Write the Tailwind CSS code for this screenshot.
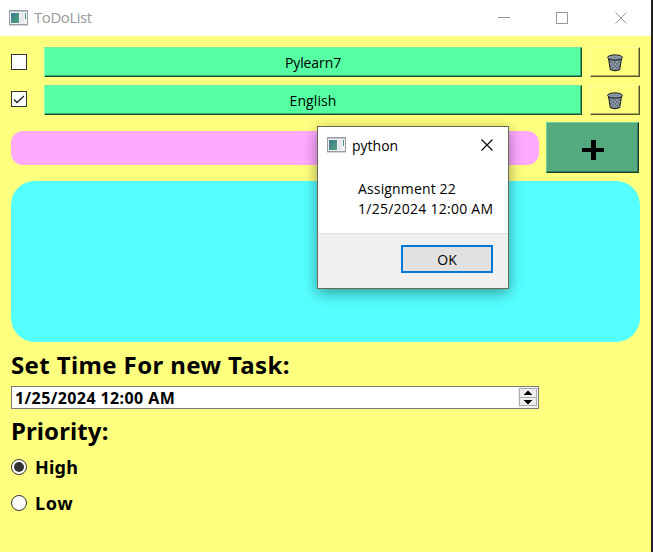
<!DOCTYPE html>
<html lang="en">
<head>
<meta charset="utf-8">
<title>ToDoList</title>
<script src="https://cdn.jsdelivr.net/npm/@tailwindcss/browser@4"></script>
</head>
<body class="w-[653px] h-[552px] overflow-hidden bg-[#20231f] font-['Open_Sans','Noto_Sans',sans-serif] text-black">
<svg class="absolute w-0 h-0">
  <defs>
    <linearGradient id="g" x1="0" y1="0" x2="1" y2="1"><stop offset="0" stop-color="#397a91"/><stop offset="1" stop-color="#54a378"/></linearGradient>
    <pattern id="mesh" width="4" height="4" patternUnits="userSpaceOnUse"><rect width="4" height="4" fill="#8c99a4"/><path d="M0 0l4 4M4 0L0 4" stroke="#606c76" stroke-width=".8"/></pattern>
    <symbol id="app" viewBox="0 0 19 16">
      <rect x=".5" y=".5" width="18" height="14" fill="#f2f3f5" stroke="#979ca4"/>
      <path d="M1 1.5h17" stroke="#bfc4ca"/>
      <rect x="2" y="3" width="8" height="10" fill="url(#g)"/>
      <rect x="11" y="3" width="4" height="10" fill="#e5e8ec"/>
      <path d="M16.5 3v6" stroke="#438f85"/><path d="M0 15.5h19" stroke="#d3d6da"/>
    </symbol>
    <symbol id="bin" viewBox="0 0 16 18">
      <path d="M1.5 4.5L3.300 15.700Q8 18 12.700 15.700L14.500 4.500Z" fill="url(#mesh)" stroke="#15191c"/>
      <ellipse cx="8" cy="3.500" rx="7.400" ry="2.600" fill="#98a5b0" stroke="#111518"/>
      <ellipse cx="8" cy="3.600" rx="5.500" ry="1.200" fill="#7d8b96"/>
    </symbol>
  </defs>
</svg>
<main class="relative w-[651px] h-[552px] bg-[#ffff7f] flex flex-col">
  <header class="h-9 bg-white flex items-center text-[#999] shrink-0">
    <svg class="ml-[9px] w-[19px] h-4"><use href="#app"/></svg>
    <span class="ml-[6px] text-[15px] leading-5 tracking-[-0.45px] flex-1 relative -top-px">ToDoList</span>
    <svg class="w-[130px] h-3 mr-[24px]" viewBox="0 0 130 12" fill="none" stroke="currentColor" shape-rendering="crispEdges"><path d="M1 5.500h12"/><rect x="59.500" y=".5" width="11" height="11"/><path d="M118.500 .5l11 11M129.500 .5l-11 11" shape-rendering="auto"/></svg>
  </header>
  <section class="pt-[11px] pl-[11px] flex flex-col gap-2 text-sm tracking-[-0.1px]">
    <div class="h-[30px] flex items-center">
      <div class="size-4 border border-[#333] bg-white"></div>
      <button class="ml-[17px] w-[538px] h-[30px] pt-0.5 bg-[#55ffa2] border border-t-[#70e8a8] border-l-[#8effc0] border-r-[#175039] border-b-[#175039] shadow-[inset_-1px_-1px_#38aa6c]">Pylearn7</button>
      <button class="ml-2 w-[50px] h-[30px] flex items-center justify-center border border-t-[#ffffaa] border-l-[#ffffaa] border-r-[#55552a] border-b-[#55552a] shadow-[inset_-1px_-1px_#aaaa55]"><svg class="w-4 h-[18px] mt-px"><use href="#bin"/></svg></button>
    </div>
    <div class="h-[30px] flex items-center">
      <div class="size-4 border border-[#333] bg-white -mt-0.5"><svg viewBox="0 0 14 14" fill="none" stroke="#222" stroke-width="1.300"><path d="M2 7.500l3 3L12 4"/></svg></div>
      <button class="ml-[17px] w-[538px] h-[30px] pt-0.5 bg-[#55ffa2] border border-t-[#70e8a8] border-l-[#8effc0] border-r-[#175039] border-b-[#175039] shadow-[inset_-1px_-1px_#38aa6c]"><span class="tracking-[0.1px]">English</span></button>
      <button class="ml-2 w-[50px] h-[30px] flex items-center justify-center border border-t-[#ffffaa] border-l-[#ffffaa] border-r-[#55552a] border-b-[#55552a] shadow-[inset_-1px_-1px_#aaaa55]"><svg class="w-4 h-[18px] mt-px"><use href="#bin"/></svg></button>
    </div>
  </section>
  <section class="mt-[7px] pl-[11px] h-[51px] flex items-center shrink-0">
    <div class="w-[528px] h-[34px] rounded-xl bg-[#ffaaff]"></div>
    <button aria-label="Add" class="ml-[7px] w-[93px] h-[51px] flex items-center justify-center bg-[#55aa7f] border border-t-[#68d49f] border-l-[#68d49f] border-r-[#183c2b] border-b-[#183c2b] shadow-[inset_-1px_-1px_#38775a]"><svg class="w-[22px] h-5 mt-1" viewBox="0 0 22 20" shape-rendering="crispEdges"><path d="M9 0h5v8h8v4h-8v8H9v-8H0V8h9z"/></svg></button>
  </section>
  <div class="mt-2 ml-[11px] w-[629px] h-[161px] rounded-3xl bg-[#55ffff] shrink-0"></div>
  <section class="pl-[11px] pt-2 font-['Noto_Sans','Open_Sans',sans-serif] font-bold">
    <h2 class="text-2xl leading-8 tracking-[0.38px] relative -top-px">Set Time For new Task:</h2>
    <div class="mt-1 w-[528px] h-[23px] border border-[#7a7a7a] bg-white flex items-center justify-between">
      <span class="pl-[3px] text-base leading-5 tracking-[0.4px]">1/25/2024 12:00 AM</span>
      <svg class="w-5 h-[21px]" viewBox="0 0 20 21" shape-rendering="crispEdges"><path d="M0 0h20v21H0z" fill="#f0f0f0"/><path d="M1.500 1.500h17v9h-17zM1.500 10.500h17v8h-17z" fill="#ededed" stroke="#adadad"/><path d="M9 4h2v1h1v1h1v1h1v1H6V7h1V6h1V5h1zM6 13h8v1h-1v1h-1v1h-1v1H9v-1H8v-1H7v-1H6z"/></svg>
    </div>
    <h2 class="mt-[6px] text-2xl leading-8 tracking-[0.1px]">Priority:</h2>
    <label class="mt-2 h-6 flex items-center gap-2 text-lg tracking-[0.2px]"><svg class="size-4" viewBox="0 0 16 16"><circle cx="8" cy="8" r="7.500" fill="#fff" stroke="#333"/><circle cx="8" cy="8" r="5" fill="#333"/></svg>High</label>
    <label class="mt-3 h-6 flex items-center gap-2 text-lg tracking-[0.7px]"><svg class="size-4" viewBox="0 0 16 16"><circle cx="8" cy="8" r="7.500" fill="#fff" stroke="#333"/></svg>Low</label>
  </section>
  <div role="dialog" class="absolute left-[317px] top-[126px] w-[192px] h-[163px] border border-[#666a55] bg-white flex flex-col shadow-[0_4px_14px_rgba(0,0,0,0.4)]">
    <div class="h-9 pl-[9px] pr-[15px] flex items-center shrink-0">
      <svg class="w-[19px] h-4"><use href="#app"/></svg>
      <span class="ml-[6px] mt-0.5 flex-1 text-sm leading-5">python</span>
      <svg class="size-3" viewBox="0 0 12 12" stroke="#000" stroke-width="1.100"><path d="M.5 .5l11 11M11.500 .5l-11 11"/></svg>
    </div>
    <p class="h-[70px] pt-4 pl-10 text-sm leading-5 tracking-[0.25px] whitespace-nowrap"><span class="tracking-[0.15px]">Assignment 22</span><br>1/25/2024 12:00 AM</p>
    <div class="flex-1 border-t border-[#dfdfdf] bg-[#f0f0f0] pl-[83px] pt-[11px]">
      <button class="w-[92px] h-7 border-2 border-[#0078d7] bg-[#e1e1e1] text-sm leading-5 pt-0.5">OK</button>
    </div>
  </div>
</main>
</body>
</html>
